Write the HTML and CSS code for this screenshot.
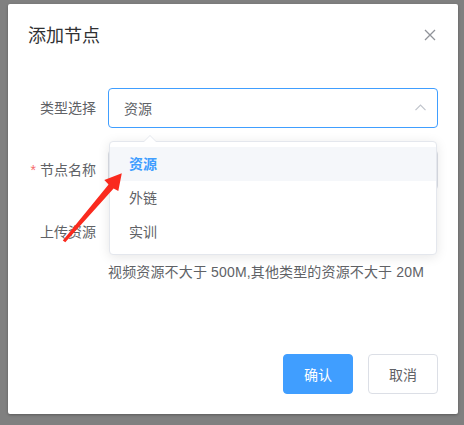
FILE: index.html
```html
<!DOCTYPE html>
<html lang="zh-CN">
<head>
<meta charset="utf-8">
<title>添加节点</title>
<link rel="stylesheet" href="styles.css">
</head>
<body>
<div class="dialog">
  <div class="dialog-header">
    <span class="title">添加节点</span>
    <button class="close" aria-label="关闭">
      <svg width="16" height="16" viewBox="0 0 16 16"><path d="M3 3L13 13M13 3L3 13" stroke="#909399" stroke-width="1.3" fill="none"/></svg>
    </button>
  </div>
  <div class="dialog-body">
    <div class="form-item">
      <label class="label">类型选择</label>
      <div class="content">
        <div class="select">
          <span class="select-value">资源</span>
          <svg class="chevron" width="11" height="7" viewBox="0 0 11 7"><path d="M0.5 6.2L5.5 1.2L10.5 6.2" stroke="#c0c4cc" stroke-width="1.2" fill="none"/></svg>
        </div>
        <div class="dropdown">
          <ul class="options">
            <li class="option selected">资源</li>
            <li class="option">外链</li>
            <li class="option">实训</li>
          </ul>
        </div>
      </div>
    </div>
    <div class="form-item">
      <label class="label required">节点名称</label>
      <div class="content"><div class="input"></div></div>
    </div>
    <div class="form-item last">
      <label class="label">上传资源</label>
      <div class="content">
        <div class="upload-row"></div>
        <div class="tip">视频资源不大于 500M,其他类型的资源不大于 20M</div>
      </div>
    </div>
  </div>
  <div class="dialog-footer">
    <button class="btn btn-primary">确认</button>
    <button class="btn">取消</button>
  </div>
</div>
<svg class="annotation" width="464" height="425" viewBox="0 0 464 425">
  <polygon points="62.8,240.5 108.6,184.6 104.3,180 121.8,173.3 118.3,191 113.6,188.6 65.3,242.3" fill="#fa2a1e"/>
</svg>
</body>
</html>
```
FILE: styles.css
```css
html, body {
  margin: 0;
  padding: 0;
}
body {
  background: #808080;
  height: 425px;
  overflow: hidden;
  position: relative;
  font-family: "Liberation Sans", "Noto Sans CJK SC", sans-serif;
  padding-top: 4px;
  box-sizing: border-box;
}
.dialog {
  position: relative;
  width: 450px;
  margin-left: 8px;
  background: #fff;
  border-radius: 2px;
  box-shadow: 0 1px 3px rgba(0, 0, 0, 0.3);
}
.dialog-header {
  padding: 20px 20px 10px;
}
.title {
  display: block;
  font-size: 18px;
  line-height: 24px;
  color: #303133;
}
.close {
  position: absolute;
  top: 23px;
  right: 20px;
  width: 16px;
  height: 16px;
  padding: 0;
  border: 0;
  background: none;
  display: flex;
}
.dialog-body {
  padding: 30px 20px;
}
.form-item {
  display: flex;
  margin-bottom: 22px;
}
.form-item.last {
  margin-bottom: 30px;
}
.label {
  width: 80px;
  flex: none;
  box-sizing: border-box;
  padding-right: 12px;
  text-align: right;
  font-size: 14px;
  line-height: 40px;
  color: #606266;
}
.required::before {
  content: "*";
  color: #f56c6c;
  margin-right: 4px;
}
.content {
  flex: 1;
  position: relative;
  min-width: 0;
}
.select {
  height: 40px;
  box-sizing: border-box;
  border: 1px solid #409eff;
  border-radius: 4px;
  padding: 0 11px 0 15px;
  display: flex;
  align-items: center;
  justify-content: space-between;
  font-size: 14px;
  color: #606266;
}
.chevron {
  display: block;
  margin-top: -2px;
}
.input {
  height: 40px;
  box-sizing: border-box;
  border: 1px solid #dcdfe6;
  border-radius: 4px;
}
.dropdown {
  position: absolute;
  z-index: 10;
  top: 53px;
  left: 1px;
  right: 1px;
  box-sizing: border-box;
  background: #fff;
  border: 1px solid #e4e7ed;
  border-radius: 4px;
  box-shadow: 0 2px 12px 0 rgba(0, 0, 0, 0.1);
  padding: 5px 0;
}
.dropdown::before,
.dropdown::after {
  content: "";
  position: absolute;
  left: 34px;
  width: 0;
  height: 0;
  border-style: solid;
  border-color: transparent;
  border-width: 0 6px 6px;
}
.dropdown::before {
  top: -7px;
  border-bottom-color: #e4e7ed;
}
.dropdown::after {
  top: -6px;
  border-bottom-color: #fff;
}
.options {
  list-style: none;
  margin: 0;
  padding: 0;
}
.option {
  height: 34px;
  line-height: 34px;
  padding: 0 19px;
  font-size: 14px;
  color: #606266;
}
.option.selected {
  color: #409eff;
  font-weight: 700;
  background: #f5f7fa;
}
.upload-row {
  height: 40px;
}
.tip {
  margin-top: 8px;
  font-size: 14px;
  line-height: 24px;
  color: #606266;
  white-space: nowrap;
  letter-spacing: 0.15px;
}
.dialog-footer {
  display: flex;
  justify-content: flex-end;
  gap: 15px;
  padding: 10px 20px 20px;
}
.btn {
  width: 70px;
  height: 40px;
  box-sizing: border-box;
  border: 1px solid #dcdfe6;
  border-radius: 4px;
  background: #fff;
  color: #606266;
  font-family: inherit;
  font-size: 14px;
  padding: 0;
}
.btn-primary {
  background: #409eff;
  border-color: #409eff;
  color: #fff;
}
.annotation {
  position: absolute;
  top: 0;
  left: 0;
  pointer-events: none;
  z-index: 20;
}
```
